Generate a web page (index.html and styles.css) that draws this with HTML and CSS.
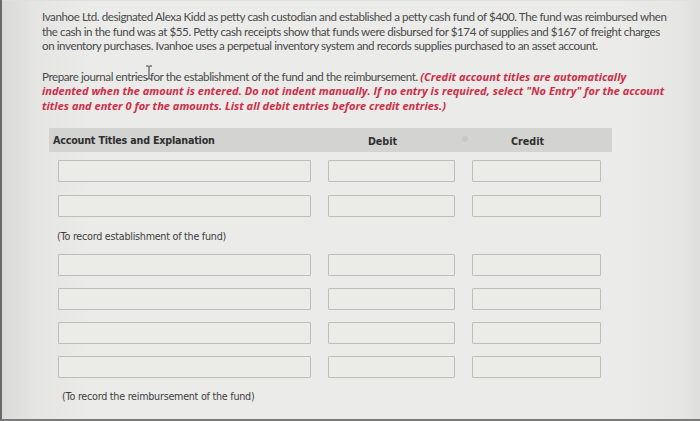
FILE: index.html
```html
<!DOCTYPE html>
<html>
<head>
<meta charset="utf-8">
<link rel="stylesheet" href="styles.css">
</head>
<body>
<div class="screen">
  <div class="page">
    <p class="intro">Ivanhoe Ltd. designated Alexa Kidd as petty cash custodian and established a petty cash fund of $400. The fund was reimbursed when the cash in the fund was at $55. Petty cash receipts show that funds were disbursed for $174 of supplies and $167 of freight charges on inventory purchases. Ivanhoe uses a perpetual inventory system and records supplies purchased to an asset account.</p>
    <p class="prompt"><span class="cursor-wrap">Prepare journal entries<svg class="ibeam" width="8" height="15" viewBox="0 0 8 15"><path d="M1 1h2.5l0.5 0.6 0.5-0.6H7M4 1.6v11.8M1 14h2.5l0.5-0.6 0.5 0.6H7" fill="none" stroke="#3a3a3a" stroke-width="1"/></svg></span> for the establishment of the fund and the reimbursement. <em class="note">(Credit account titles are automatically indented when the amount is entered. Do not indent manually. If no entry is required, select "No Entry" for the account titles and enter 0 for the amounts. List all debit entries before credit entries.)</em></p>

    <div class="journal">
      <div class="head">
        <div class="h-acct">Account Titles and Explanation</div>
        <div class="h-num">Debit</div>
        <div class="h-num">Credit</div>
        <span class="dot"></span>
      </div>

      <div class="group first">
        <div class="row"><div class="box acct"></div><div class="box amt"></div><div class="box amt"></div></div>
        <div class="row"><div class="box acct"></div><div class="box amt"></div><div class="box amt"></div></div>
        <div class="memo">(To record establishment of the fund)</div>
      </div>

      <div class="group second">
        <div class="row"><div class="box acct"></div><div class="box amt"></div><div class="box amt"></div></div>
        <div class="row"><div class="box acct"></div><div class="box amt"></div><div class="box amt"></div></div>
        <div class="row"><div class="box acct"></div><div class="box amt"></div><div class="box amt"></div></div>
        <div class="row"><div class="box acct"></div><div class="box amt"></div><div class="box amt"></div></div>
        <div class="memo">(To record the reimbursement of the fund)</div>
      </div>
    </div>
  </div>
</div>
</body>
</html>
```

FILE: styles.css
```css
html, body {
  margin: 0;
  padding: 0;
  width: 700px;
  height: 421px;
  overflow: hidden;
  background: #e6e6e4;
}

.screen {
  width: 698px;
  height: 419px;
  border-left: 2px solid #6a6a6a;
  border-bottom: 2px solid #7a7a7a;
  background: linear-gradient(to right, #d9d9d7 0px, #e4e4e2 30px, #ebebe9 90px, #ebebe9 620px, #e5e5e3 680px, #dededc 700px);
}

.page {
  padding: 9px 0 0 40px;
  border-top: 1px solid #e0e0de;
}

.intro, .prompt {
  margin: 0;
  font-family: Lato, "Open Sans", sans-serif;
  font-size: 11.6px;
  line-height: 14.5px;
  color: #4a4a4a;
  letter-spacing: -0.42px;
  width: 628px;
}

.prompt {
  margin-top: 16px;
}

.cursor-wrap {
  position: relative;
}

.ibeam {
  position: absolute;
  right: -6px;
  top: -5px;
}

.note {
  font-family: "Open Sans", "DejaVu Sans", sans-serif;
  font-weight: bold;
  font-style: italic;
  font-size: 11px;
  color: #cf2d47;
  letter-spacing: 0.02px;
}

.journal {
  margin: 15px 0 0 7px;
  width: 563px;
  font-family: "DejaVu Sans", Verdana, sans-serif;
  color: #333;
}

.head {
  position: relative;
  display: grid;
  grid-template-columns: 270px 127px 17px 129px;
  height: 24px;
  align-items: center;
  background: #d3d3d1;
  font-size: 9.6px;
  font-weight: bold;
  color: #2f2f2f;
}

.h-acct {
  padding-left: 4px;
  letter-spacing: -0.2px;
}

.h-num {
  text-align: center;
  padding-top: 3px;
}

.head .h-num:nth-child(3) {
  grid-column: 4;
}

.dot {
  position: absolute;
  left: 413px;
  top: 8px;
  width: 6px;
  height: 6px;
  border-radius: 50%;
  background: #c7c7c5;
}

.group {
  display: flex;
  flex-direction: column;
}

.group.first {
  margin-top: 8px;
  gap: 13px;
}

.group.second {
  margin-top: 11px;
  gap: 12px;
}

.row {
  display: grid;
  grid-template-columns: 253px 127px 129px;
  column-gap: 17px;
  padding-left: 9px;
}

.box {
  height: 22px;
  box-sizing: border-box;
  border: 1px solid #bdbdbb;
  border-radius: 1px;
  background: #ebebe8;
}

.memo {
  padding-left: 8px;
  font-size: 9.6px;
  color: #3d3d3d;
  letter-spacing: -0.25px;
  line-height: 12px;
}

.group.first .memo {
  margin-top: 1px;
}

.group.second .memo {
  margin-top: 1px;
  padding-left: 13px;
}
```
